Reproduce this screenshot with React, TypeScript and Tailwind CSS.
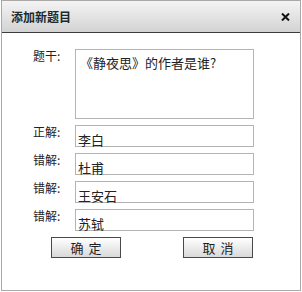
import React from 'react'

const rows = [
  { label: '正解:', value: '李白' },
  { label: '错解:', value: '杜甫' },
  { label: '错解:', value: '王安石' },
  { label: '错解:', value: '苏轼' },
]

const font = { fontFamily: '"Noto Sans CJK SC", "Liberation Sans", sans-serif' }

const DialogButton: React.FC<{ left: string; right: string }> = ({ left, right }) => (
  <button className="w-[70px] h-[21px] border border-[#4a4a4a] bg-gradient-to-b from-white to-[#d9d9d9] text-[13px] leading-[19px] text-[#1e1e1e] flex items-center justify-center gap-[5px]">
    <span>{left}</span>
    <span>{right}</span>
  </button>
)

export default function App() {
  return (
    <div className="w-[302px] h-[292px] bg-white px-px pb-px" style={font}>
      <div className="h-[291px] border border-[#a9a9a9] flex flex-col">
        {/* title bar */}
        <div className="h-[32px] shrink-0 border-b border-[#3c3c3c] bg-gradient-to-b from-[#f4f4f4] to-[#d3d3d3] flex items-center justify-between pl-[9px] pr-[10px]">
          <span className="text-[12px] font-bold text-[#1b2a2b] leading-none">添加新题目</span>
          <svg width="9" height="8" viewBox="0 0 9 8" className="mt-px">
            <path d="M1 0.5 L8 7.5 M8 0.5 L1 7.5" stroke="#111" strokeWidth="2" />
          </svg>
        </div>

        {/* form */}
        <div className="flex flex-col pt-[16px] pl-[31px] text-[12px] text-[#222]">
          <div className="flex">
            <span className="w-[42px] leading-[14px]">题干:</span>
            <div className="w-[179px] h-[70px] border border-[#b4b4b4] pl-[4px] pt-[6px] text-[13px] leading-[14px]">
              《静夜思》的作者是谁?
            </div>
          </div>

          <div className="flex flex-col gap-[6px] mt-[6px]">
            {rows.map((r, i) => (
              <div key={i} className="flex">
                <span className="w-[42px] leading-[14px]">{r.label}</span>
                <div className="w-[179px] h-[22px] border border-[#b4b4b4] pl-[2px] pt-[7px] text-[13px] leading-[13px]">
                  {r.value}
                </div>
              </div>
            ))}
          </div>

          <div className="flex mt-[6px] pl-[18px] gap-[62px]">
            <DialogButton left="确" right="定" />
            <DialogButton left="取" right="消" />
          </div>
        </div>
      </div>
    </div>
  )
}
